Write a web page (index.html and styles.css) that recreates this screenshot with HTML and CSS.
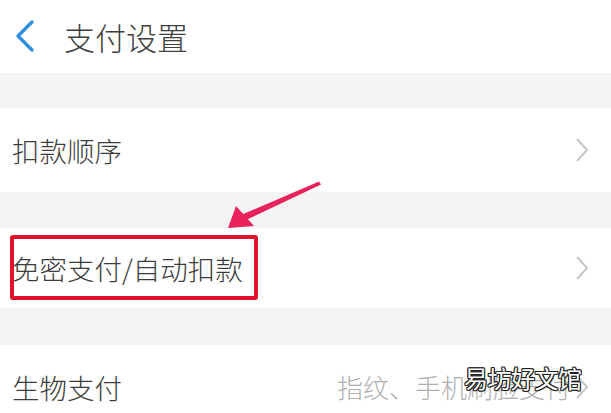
FILE: index.html
```html
<!DOCTYPE html>
<html lang="zh-CN">
<head>
<meta charset="utf-8">
<title>支付设置</title>
<link rel="stylesheet" href="styles.css">
</head>
<body>
<div class="page">
  <header class="header">
    <svg class="back" width="22" height="32" viewBox="0 0 22 32"><path d="M18 2 L4 16 L18 30" fill="none" stroke="#2a8fe0" stroke-width="3.2" stroke-linecap="round" stroke-linejoin="round"/></svg>
    <h1 class="title">支付设置</h1>
  </header>
  <div class="gap g1"></div>
  <div class="row r1">
    <span class="label">扣款顺序</span>
    <svg class="chev" width="14" height="26" viewBox="0 0 14 26"><path d="M2 2 L12 13 L2 24" fill="none" stroke="#c6c6c6" stroke-width="2"/></svg>
  </div>
  <div class="gap g2"></div>
  <div class="row r2">
    <span class="label">免密支付/自动扣款</span>
    <svg class="chev" width="14" height="26" viewBox="0 0 14 26"><path d="M2 2 L12 13 L2 24" fill="none" stroke="#c6c6c6" stroke-width="2"/></svg>
    <div class="redbox"></div>
  </div>
  <div class="gap g3"></div>
  <div class="row r3">
    <span class="label">生物支付</span>
    <span class="value">指纹、手机刷脸支付</span>
    <svg class="chev" width="14" height="26" viewBox="0 0 14 26"><path d="M2 2 L12 13 L2 24" fill="none" stroke="#c6c6c6" stroke-width="2"/></svg>
  </div>
  <svg class="arrow" width="611" height="413" viewBox="0 0 611 413">
    <path d="M319 181.5 L321 184.5 L244 221 L241 215 Z" fill="#e8225b"/>
    <path d="M228 228 L236 206 L254 226 Z" fill="#e8225b"/>
  </svg>
  <div class="watermark">易坊好文馆</div>
</div>
</body>
</html>
```
FILE: styles.css
```css
html, body {
  margin: 0;
  padding: 0;
  background: #ffffff;
}
.page {
  position: relative;
  width: 611px;
  height: 413px;
  overflow: hidden;
  font-family: "Noto Sans CJK SC", "Noto Sans", sans-serif;
  color: #333333;
}
.header {
  height: 73px;
  display: flex;
  align-items: center;
  padding-left: 14px;
  background: #ffffff;
}
.back {
  display: block;
  margin-top: -1px;
}
.title {
  margin: 0 0 0 28px;
  font-size: 31px;
  font-weight: 300;
  line-height: 1;
  color: #404040;
}
.gap {
  background: #f4f4f4;
}
.g1 { height: 35px; }
.g2 { height: 36px; }
.g3 { height: 37px; }
.row {
  position: relative;
  display: flex;
  align-items: center;
  padding: 0 22px 0 12px;
  background: #ffffff;
}
.r1 { height: 84px; }
.r2 { height: 80px; }
.r3 { height: 84px; }
.label {
  font-size: 27.5px;
  font-weight: 300;
  line-height: 1;
  color: #3c3c3c;
  flex: 1;
  margin-top: 2px;
}
.value {
  font-size: 26px;
  font-weight: 300;
  line-height: 1;
  color: #b0b0b0;
  margin-right: 4px;
}
.chev {
  display: block;
}
.redbox {
  position: absolute;
  left: 10px;
  top: 7px;
  width: 240px;
  height: 57px;
  border: 4px solid #e3122c;
  border-radius: 3px;
}
.arrow {
  position: absolute;
  left: 0;
  top: 0;
}
.watermark {
  position: absolute;
  left: 464px;
  top: 366px;
  font-size: 24px;
  font-weight: 400;
  line-height: 1;
  color: #ffffff;
  letter-spacing: -0.5px;
  text-shadow:
    1px 0 0 #222, -1px 0 0 #222, 0 1px 0 #222, 0 -1px 0 #222,
    1px 1px 0 #222, -1px -1px 0 #222, 1px -1px 0 #222, -1px 1px 0 #222;
}
```
